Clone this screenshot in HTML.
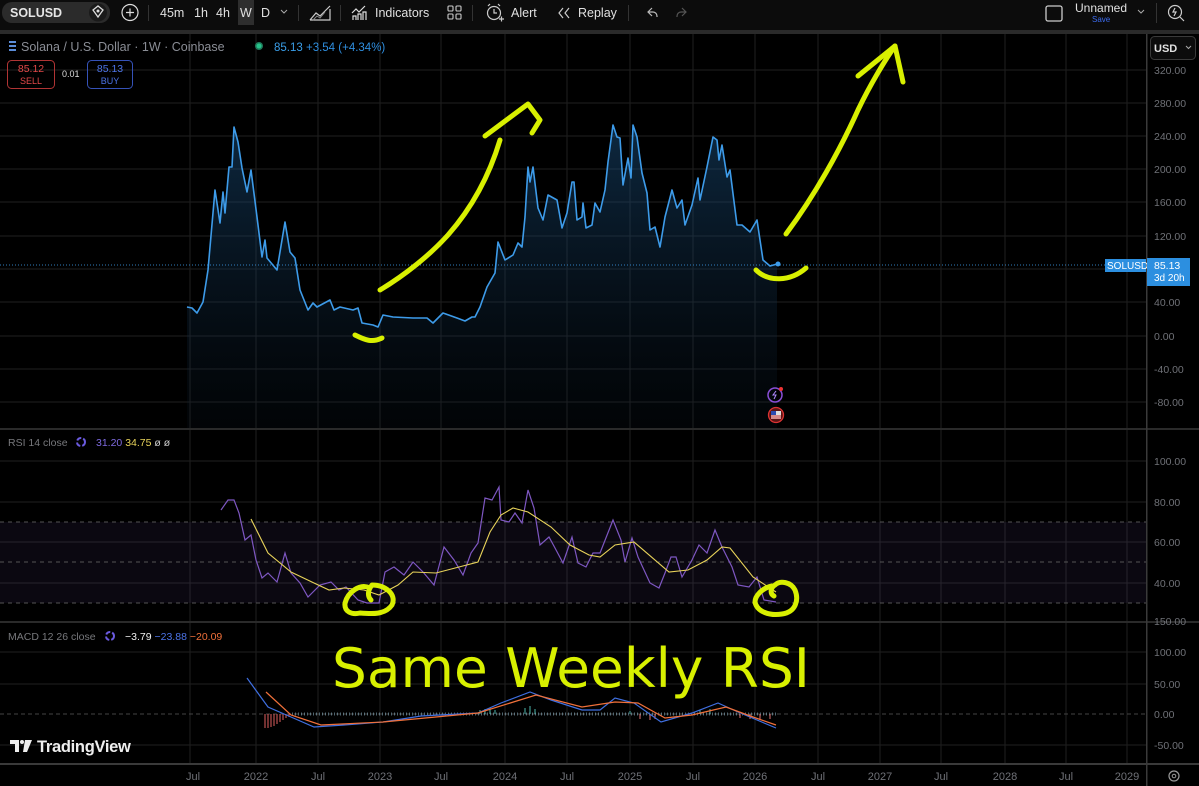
<!DOCTYPE html>
<html><head><meta charset="utf-8"><style>
html,body{margin:0;padding:0;background:#000;width:1199px;height:786px;overflow:hidden}
svg{display:block;font-family:"Liberation Sans",sans-serif}
</style></head><body>
<svg width="1199" height="786" viewBox="0 0 1199 786" xmlns="http://www.w3.org/2000/svg">
<defs>
<linearGradient id="fg" x1="0" y1="0" x2="0" y2="1">
<stop offset="0" stop-color="#1e5a8f" stop-opacity="0.45"/>
<stop offset="1" stop-color="#0b1c2c" stop-opacity="0.15"/>
</linearGradient>
</defs>
<rect width="1199" height="786" fill="#000"/>
<!-- toolbar -->
<rect x="0" y="0" width="1199" height="31" fill="#0c0c0c"/>
<rect x="0" y="30" width="1199" height="4" fill="#2a2a2a"/>
<rect x="2" y="2" width="108" height="21" rx="10" fill="#2b2b2b"/>
<text x="10" y="17" fill="#e6e6e6" font-size="12.5" font-weight="bold">SOLUSD</text>
<circle cx="98" cy="12.5" r="9" fill="#1a1a1a"/>
<path d="M93 10 L98 6 L103 10 L98 17 Z" fill="none" stroke="#ddd" stroke-width="1.3"/>
<circle cx="98" cy="11" r="1.5" fill="#ddd"/>
<circle cx="130" cy="12.5" r="8" fill="none" stroke="#ddd" stroke-width="1.2"/>
<path d="M126 12.5h8M130 8.5v8" stroke="#ddd" stroke-width="1.2"/>
<rect x="148" y="5" width="1" height="16" fill="#333"/>
<g fill="#e0e0e0" font-size="12.5">
<text x="160" y="17">45m</text><text x="194" y="17">1h</text><text x="216" y="17">4h</text>
<rect x="238" y="0" width="16" height="25" fill="#2e2e2e"/>
<text x="240" y="17">W</text><text x="261" y="17">D</text>
<text x="375" y="17">Indicators</text><text x="511" y="17">Alert</text><text x="578" y="17">Replay</text>
<text x="1075" y="12" font-size="12">Unnamed</text>
</g>
<text x="1092" y="22" fill="#3c6cf0" font-size="8">Save</text>
<path d="M281 10l3 3 3-3" stroke="#aaa" fill="none"/>
<rect x="298" y="5" width="1" height="16" fill="#333"/>
<path d="M310 20 L316 13 L320 16 L330 6 M310 20 L330 20 L330 9" stroke="#ccc" fill="none" stroke-width="1.2"/>
<path d="M313 20l4-4 3 2 5-6" stroke="#888" fill="none"/>
<rect x="340" y="5" width="1" height="16" fill="#333"/>
<path d="M352 13l4-4 3 3 6-6M353 20v-4h3v4M358 20v-6h3v6M363 20v-8h3v8" stroke="#ddd" fill="none" stroke-width="1.2"/>
<g fill="none" stroke="#ccc" stroke-width="1.1"><rect x="448" y="6" width="5" height="5" rx="1"/><rect x="456" y="6" width="5" height="5" rx="1"/><rect x="448" y="14" width="5" height="5" rx="1"/><rect x="456" y="14" width="5" height="5" rx="1"/></g>
<rect x="472" y="5" width="1" height="16" fill="#333"/>
<circle cx="494" cy="13" r="6.5" fill="none" stroke="#ccc" stroke-width="1.2"/>
<path d="M494 9v4h3M488 6l2-2M500 6l-2-2M499 19h5M501.5 16.5v5" stroke="#ccc" fill="none" stroke-width="1.2"/>
<path d="M563 8l-4 5 4 5M569 8l-4 5 4 5" stroke="#ccc" fill="none" stroke-width="1.2"/>
<rect x="628" y="5" width="1" height="16" fill="#333"/>
<path d="M652 8l-4 4 4 4M648 12h5a4 4 0 0 1 4 4v1" stroke="#bbb" fill="none" stroke-width="1.2"/>
<path d="M682 8l4 4-4 4M686 12h-5a4 4 0 0 0-4 4v1" stroke="#555" fill="none" stroke-width="1.2"/>
<rect x="1046" y="6" width="16" height="15" rx="2" fill="none" stroke="#ccc" stroke-width="1.3"/>
<path d="M1138 10l3 3 3-3" stroke="#aaa" fill="none"/>
<rect x="1156" y="3" width="1" height="20" fill="#333"/>
<circle cx="1175" cy="12" r="6.5" fill="none" stroke="#ccc" stroke-width="1.2"/>
<path d="M1175 8l-2 4h3l-2 4M1180 17l4 4" stroke="#ccc" fill="none" stroke-width="1.2"/>

<!-- grid -->
<g stroke="#1f1f1f" stroke-width="1">
<path d="M190 34V764M256 34V764M318 34V764M380 34V764M441 34V764M505 34V764M567 34V764M630 34V764M693 34V764M755 34V764M818 34V764M880 34V764M941 34V764M1005 34V764M1066 34V764M1127 34V764"/>
<path d="M0 70H1146M0 103H1146M0 136H1146M0 169H1146M0 202H1146M0 236H1146M0 269H1146M0 302H1146M0 336H1146M0 369H1146M0 402H1146"/>
<path d="M0 461H1146M0 502H1146M0 542H1146M0 583H1146"/>
<path d="M0 652H1146M0 684H1146M0 745H1146"/>
</g>
<rect x="0" y="522" width="1146" height="81" fill="#7e57c2" fill-opacity="0.09"/>
<g stroke="#555" stroke-dasharray="4 4"><path d="M0 522H1146M0 562H1146M0 603H1146"/></g>
<path d="M0 714H1146" stroke="#444" stroke-dasharray="4 3"/>
<!-- pane separators -->
<rect x="0" y="428" width="1199" height="2" fill="#2a2a2a"/>
<rect x="0" y="621" width="1199" height="2" fill="#2a2a2a"/>
<rect x="0" y="763" width="1199" height="2" fill="#3a3a3a"/>
<rect x="1146" y="34" width="1.5" height="752" fill="#3a3a3a"/>

<!-- price -->
<path d="M187 307L192 308L197 313L203 302L208 270L215 190L220 223L223 192L225 213L229 167L232 167L234 127L238 142L242 168L247 192L251 170L257 217L262 257L265 240L267 258L277 270L285 222L290 252L295 258L300 290L308 310L313 303L317 307L330 300L334 310L340 307L353 310L358 308L362 323L373 325L378 327L383 315L393 317L413 318L427 318L433 323L443 313L457 318L465 321L472 317L475 317L480 307L487 287L495 273L498 242L505 260L513 255L518 243L522 247L525 217L528 167L530 182L533 167L538 208L543 220L548 195L557 200L562 228L567 213L572 182L574 182L577 220L582 217L583 203L586 228L592 225L595 203L600 212L605 190L608 162L613 125L617 137L620 138L623 185L628 158L631 178L633 125L637 137L642 173L647 193L650 230L655 227L660 247L665 217L672 190L677 208L682 200L685 225L692 205L698 178L700 200L707 167L713 137L717 140L719 160L722 145L727 177L730 170L737 225L742 225L750 232L757 220L763 260L770 266L777 264L777 428L187 428Z" fill="url(#fg)"/>
<path d="M187 307L192 308L197 313L203 302L208 270L215 190L220 223L223 192L225 213L229 167L232 167L234 127L238 142L242 168L247 192L251 170L257 217L262 257L265 240L267 258L277 270L285 222L290 252L295 258L300 290L308 310L313 303L317 307L330 300L334 310L340 307L353 310L358 308L362 323L373 325L378 327L383 315L393 317L413 318L427 318L433 323L443 313L457 318L465 321L472 317L475 317L480 307L487 287L495 273L498 242L505 260L513 255L518 243L522 247L525 217L528 167L530 182L533 167L538 208L543 220L548 195L557 200L562 228L567 213L572 182L574 182L577 220L582 217L583 203L586 228L592 225L595 203L600 212L605 190L608 162L613 125L617 137L620 138L623 185L628 158L631 178L633 125L637 137L642 173L647 193L650 230L655 227L660 247L665 217L672 190L677 208L682 200L685 225L692 205L698 178L700 200L707 167L713 137L717 140L719 160L722 145L727 177L730 170L737 225L742 225L750 232L757 220L763 260L770 266L777 264" fill="none" stroke="#3d9be9" stroke-width="1.6" stroke-linejoin="round"/>
<circle cx="778" cy="264" r="2.5" fill="#3d9be9"/>
<path d="M0 265H1105" stroke="#3d9be9" stroke-width="1" stroke-dasharray="1 2" opacity="0.8"/>

<!-- RSI -->
<path d="M221 510L228 500L234 500L239 513L245 540L251 535L256 560L262 578L268 573L277 582L285 553L291 573L300 583L308 597L320 585L331 582L339 590L346 587L358 600L367 603L379 603L385 572L394 567L404 575L413 562L423 572L434 585L444 547L454 560L463 575L471 553L478 543L485 498L492 500L499 487L501 520L509 522L515 513L522 523L528 490L534 508L540 545L549 537L555 548L563 563L572 537L578 563L586 567L593 553L600 553L613 520L621 540L625 562L632 538L638 557L650 583L659 588L665 573L671 557L676 557L682 577L692 560L699 545L707 553L715 530L722 547L732 567L738 585L749 587L757 577L764 600L776 602" fill="none" stroke="#7e57c2" stroke-width="1.2"/>
<path d="M251 519L268 553L291 572L314 583L329 590L344 588L364 590L379 595L398 585L413 572L436 573L459 567L478 562L490 532L501 515L513 508L528 512L551 527L570 545L589 555L600 557L615 545L634 542L669 572L688 570L707 560L722 547L730 548L753 577L776 592" fill="none" stroke="#e8d35a" stroke-width="1.1"/>

<!-- MACD -->
<path d="M265 714v14M268 714v14M271 714v13M274 714v12M277 714v10M280 714v8M283 714v6M286 714v4M289 714v3" stroke="#e06060" stroke-width="1"/>
<path d="M292 714H778" stroke="#8ab" stroke-width="3" stroke-dasharray="1 2" opacity="0.6"/>
<path d="M480 714v-4M485 714v-5M490 714v-6M495 714v-4M525 714v-6M530 714v-8M535 714v-5M630 714v-3M700 714v-4M710 714v-5" stroke="#4db6ac"/>
<path d="M640 714v5M650 714v6M655 714v5M740 714v4M750 714v5M760 714v6M770 714v5" stroke="#e57373"/>
<path d="M247 678L268 707L291 717L314 727L344 725L383 722L421 716L478 713L501 703L530 692L551 700L582 710L600 710L615 698L634 703L661 722L692 713L718 703L738 712L776 728" fill="none" stroke="#3f6fe0" stroke-width="1.2"/>
<path d="M266 692L291 715L321 725L383 722L478 713L536 695L582 707L615 702L638 703L665 718L692 715L726 707L753 717L776 725" fill="none" stroke="#f0703a" stroke-width="1.2"/>

<!-- legends -->
<g fill="#5b8cd8"><rect x="9" y="41" width="7" height="2"/><rect x="9" y="45" width="7" height="2"/><rect x="9" y="49" width="7" height="2"/></g>
<text x="21" y="51" fill="#8a8d95" font-size="12.5">Solana / U.S. Dollar · 1W · Coinbase</text>
<circle cx="259" cy="46" r="4" fill="#1f7a5a"/><circle cx="259" cy="46" r="2.5" fill="#26c28a"/>
<text x="274" y="51" fill="#3a9ee8" font-size="11.5">85.13 <tspan fill="#2f8fe0">+3.54 (+4.34%)</tspan></text>
<rect x="7.5" y="60.5" width="47" height="28" rx="4" fill="none" stroke="#b03434"/>
<text x="31" y="72" fill="#e34848" font-size="10.5" text-anchor="middle">85.12</text>
<text x="31" y="84" fill="#e34848" font-size="9" text-anchor="middle">SELL</text>
<text x="62" y="77" fill="#ddd" font-size="9">0.01</text>
<rect x="87.5" y="60.5" width="45" height="28" rx="4" fill="none" stroke="#3552b8"/>
<text x="110" y="72" fill="#4c74e8" font-size="10.5" text-anchor="middle">85.13</text>
<text x="110" y="84" fill="#4c74e8" font-size="9" text-anchor="middle">BUY</text>
<text x="8" y="446" fill="#77787c" font-size="10.5">RSI 14 close</text>
<circle cx="81" cy="442" r="4" fill="none" stroke="#6a5adf" stroke-width="2" stroke-dasharray="5 2"/>
<text x="96" y="446" fill="#7e6ae0" font-size="10.5">31.20 <tspan fill="#e8d35a">34.75</tspan> <tspan fill="#ccc">ø ø</tspan></text>
<text x="8" y="640" fill="#77787c" font-size="10.5">MACD 12 26 close</text>
<circle cx="110" cy="636" r="4" fill="none" stroke="#6a5adf" stroke-width="2" stroke-dasharray="5 2"/>
<text x="125" y="640" fill="#eee" font-size="10.5">−3.79 <tspan fill="#4c74e8">−23.88</tspan> <tspan fill="#f0703a">−20.09</tspan></text>

<!-- event icons -->
<circle cx="775" cy="395" r="7" fill="none" stroke="#8a4fd8" stroke-width="1.5"/><path d="M776 391l-3 4h3l-2 4" stroke="#b088ff" fill="none"/><circle cx="781" cy="389" r="2" fill="#e33"/>
<circle cx="776" cy="415" r="7.5" fill="#5a1414" stroke="#d33" stroke-width="1.3"/><rect x="771" y="411" width="10" height="8" fill="#ddd"/><rect x="771" y="411" width="5" height="4" fill="#2a4ab0"/><path d="M771 416h10M771 418h10" stroke="#c33"/>

<!-- axis -->
<rect x="1150.5" y="36.5" width="45" height="23" rx="4" fill="#0c0c0c" stroke="#3a3a3a"/>
<text x="1154" y="52" fill="#e0e0e0" font-size="11" font-weight="bold">USD</text>
<path d="M1186 46l2.5 2.5 2.5-2.5" stroke="#aaa" fill="none"/>
<g fill="#6f7177" font-size="10.5">
<text x="1154" y="74">320.00</text><text x="1154" y="107">280.00</text><text x="1154" y="140">240.00</text><text x="1154" y="173">200.00</text><text x="1154" y="206">160.00</text><text x="1154" y="240">120.00</text><text x="1154" y="306">40.00</text><text x="1154" y="340">0.00</text><text x="1154" y="373">-40.00</text><text x="1154" y="406">-80.00</text>
<text x="1154" y="465">100.00</text><text x="1154" y="506">80.00</text><text x="1154" y="546">60.00</text><text x="1154" y="587">40.00</text>
<text x="1154" y="625">150.00</text><text x="1154" y="656">100.00</text><text x="1154" y="688">50.00</text><text x="1154" y="718">0.00</text><text x="1154" y="749">-50.00</text>
</g>
<rect x="1105" y="259" width="41" height="13" fill="#2c8fe0"/>
<text x="1107" y="269" fill="#fff" font-size="10">SOLUSD</text>
<rect x="1147" y="258" width="43" height="28" fill="#2c8fe0"/>
<text x="1154" y="269" fill="#fff" font-size="10.5">85.13</text>
<text x="1154" y="281" fill="#fff" font-size="10">3d 20h</text>
<g fill="#6f7177" font-size="11" text-anchor="middle">
<text x="193" y="780">Jul</text><text x="256" y="780">2022</text><text x="318" y="780">Jul</text><text x="380" y="780">2023</text><text x="441" y="780">Jul</text><text x="505" y="780">2024</text><text x="567" y="780">Jul</text><text x="630" y="780">2025</text><text x="693" y="780">Jul</text><text x="755" y="780">2026</text><text x="818" y="780">Jul</text><text x="880" y="780">2027</text><text x="941" y="780">Jul</text><text x="1005" y="780">2028</text><text x="1066" y="780">Jul</text><text x="1127" y="780">2029</text>
</g>
<circle cx="1174" cy="776" r="5" fill="none" stroke="#999" stroke-width="1.2"/><circle cx="1174" cy="776" r="1.8" fill="none" stroke="#999"/>

<!-- TradingView logo -->
<path d="M10 740h9v12h-4v-8h-5z" fill="#eee"/><circle cx="22" cy="742" r="2" fill="#eee"/><path d="M25 740h7l-5 12h-4z" fill="#eee"/>
<text x="37" y="752" fill="#eee" font-size="16.5" font-weight="bold" letter-spacing="-0.3">TradingView</text>

<!-- yellow annotations -->
<g fill="none" stroke="#d8f000" stroke-width="5" stroke-linecap="round" stroke-linejoin="round">
<path d="M380 290C405 275 430 255 448 235C470 210 488 180 500 140"/>
<path d="M485 136L528 104L540 120L532 133"/>
<path d="M355 335C365 340 372 343 382 338"/>
<path d="M786 234C815 195 840 150 858 110C870 85 885 60 895 46"/>
<path d="M858 76L895 46L903 82"/>
<path d="M756 270C768 282 790 282 806 268"/>
<path d="M370 588C360 583 348 592 345 603C344 612 352 615 360 613C372 614 385 615 392 605C397 594 385 585 372 585C368 590 367 596 371 600"/>
<path d="M772 586C762 588 755 596 755 602C757 612 770 616 782 614C796 612 799 600 795 590C791 582 780 580 775 585C770 588 770 594 774 596"/>
</g>
<text x="332" y="687" fill="#d8f000" font-size="54" font-family="DejaVu Sans, sans-serif" textLength="478" lengthAdjust="spacingAndGlyphs">Same Weekly RSI</text>
</svg>
</body></html>
